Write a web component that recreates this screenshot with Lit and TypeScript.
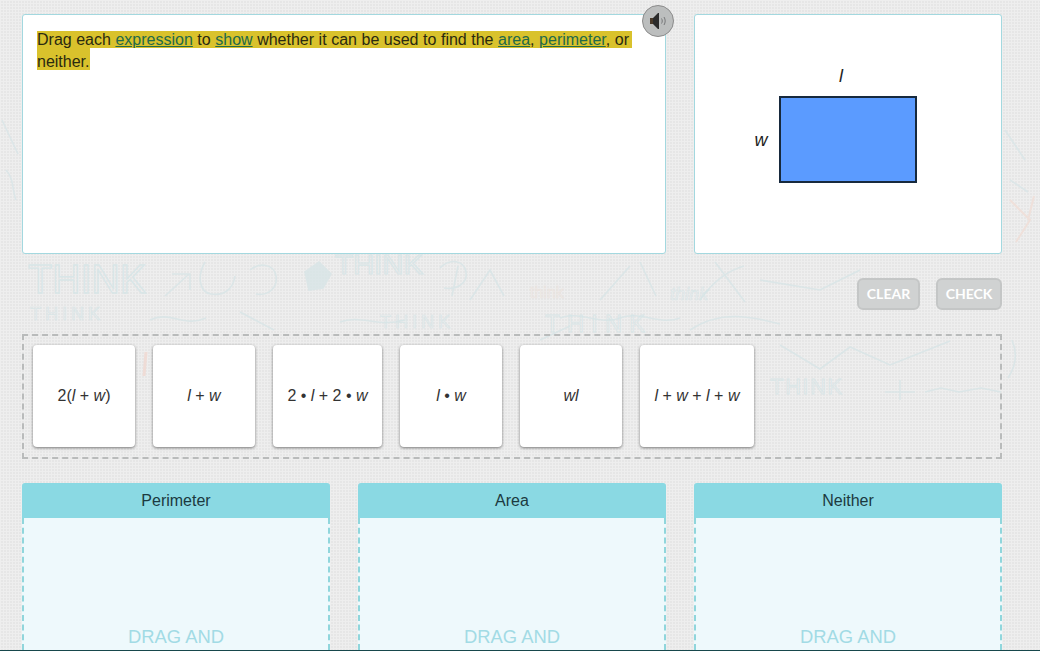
import { LitElement, html, css, svg } from "lit";
import { customElement } from "lit/decorators.js";

type Term = string | { v: string };
const v = (s: string) => ({ v: s });

const EXPRESSIONS: { w: number; terms: Term[] }[] = [
  { w: 102, terms: ["2(", v("l"), " + ", v("w"), ")"] },
  { w: 102, terms: [v("l"), " + ", v("w")] },
  { w: 109, terms: ["2 • ", v("l"), " + 2 • ", v("w")] },
  { w: 102, terms: [v("l"), " • ", v("w")] },
  { w: 102, terms: [v("w"), v("l")] },
  { w: 114, terms: [v("l"), " + ", v("w"), " + ", v("l"), " + ", v("w")] },
];

const BINS = ["Perimeter", "Area", "Neither"];

// faint handwriting behind the page
const doodles = svg`
  <g fill="none" stroke="#d8e5e7" stroke-width="1.6" opacity="0.8">
    <path d="M165 296l24-22M172 274h18v16M205 262c-8 14-6 30 6 32s22-4 24-18M250 270c10-8 24-6 26 6s-8 20-20 18" />
    <path d="M305 272l14-10 12 12-8 14-14 2z" fill="#d8e5e7" />
    <path d="M440 268c10-10 24-8 26 4s-10 18-22 16M452 296l6-30M470 300l20-30 14 26" />
    <path d="M600 300l30-34M640 262l16 34M700 300c14-20 30-30 44-34M760 280l60 10 40-20M715 262l30 40" />
    <path d="M560 318c20-8 40 8 60 0s40 8 60 0M540 340l30-14M690 330c30-20 60-14 90-6" />
    <path d="M885 392h30M925 392l16-4 18 4 22-4 20 4M900 380v20" />
    <path d="M1012 340c6 14 4 26-4 38M780 345l40 24 30-22 40 18 60-24" />
    <path d="M2 120l16 34M6 170c8 8 6 20 10 30M1005 130l20 30M1010 180l18 12" />
    <path d="M150 320c20-10 34 8 56-2M340 322c20-8 40 6 64-2M240 312l34 18" />
  </g>
  <path d="M1010 200l20 20-14 22M1034 196l-6 24" fill="none" stroke="#efe0da" stroke-width="2" />
  <path d="M146 352l-2 24" fill="none" stroke="#efdcd6" stroke-width="3" />
  <g font-family="Liberation Sans, sans-serif" fill="none" stroke="#d6e5e7" opacity="0.85">
    <text x="28" y="293" font-size="40" stroke-width="1.4" textLength="118" lengthAdjust="spacingAndGlyphs">THINK</text>
    <text x="335" y="274" font-size="28" stroke-width="1.2" textLength="88" lengthAdjust="spacingAndGlyphs">THINK</text>
    <text x="380" y="328" font-size="18" stroke-width="0.7" textLength="70">THINK</text>
    <text x="30" y="320" font-size="18" stroke-width="0.7" textLength="70">THINK</text>
    <text x="770" y="394" font-size="22" stroke-width="0.8" textLength="72">THINK</text>
    <text x="530" y="298" font-size="16" stroke-width="0.6" stroke="#ece2dc">think</text>
    <text x="670" y="300" font-size="18" stroke-width="0.6" font-style="italic">think</text>
    <text x="545" y="332" font-size="24" stroke-width="0.8" textLength="100">THINK</text>
  </g>
`;

@customElement("app-root")
export class AppRoot extends LitElement {
  static styles = css`
    :host {
      display: block;
      position: relative;
      width: 1040px;
      height: 651px;
      overflow: hidden;
      box-sizing: border-box;
      border-bottom: 1px solid #17474c;
      font-family: "Liberation Sans", Arial, sans-serif;
      font-size: 16px;
      color: #222;
      background-color: #e6e6e6;
      background-image: linear-gradient(#eeeeee 1px, transparent 1px),
        linear-gradient(90deg, #eeeeee 1px, transparent 1px);
      background-size: 3px 3px;
    }
    .doodles {
      position: absolute;
      inset: 0;
    }
    .page {
      position: relative;
      display: flex;
      flex-direction: column;
      padding: 14px 38px 0 22px;
    }
    .top {
      display: flex;
      gap: 28px;
      height: 240px;
    }
    .panel {
      box-sizing: border-box;
      background: #fff;
      border: 1px solid #a3d8df;
      border-radius: 3px;
    }
    .prompt {
      position: relative;
      width: 644px;
      padding: 16px 0 0 14px;
    }
    .line {
      box-sizing: border-box;
      background: #d9c22c;
      color: #2a2a10;
    }
    .line.first {
      width: 595px;
      height: 17px;
      padding-right: 3px;
      line-height: 17px;
      text-align: justify;
      text-align-last: justify;
    }
    .line.last {
      width: fit-content;
      height: 22px;
      padding-right: 1px;
      line-height: 28px;
    }
    .term {
      color: #23694a;
      text-decoration: underline;
    }
    .speaker {
      position: absolute;
      top: -10px;
      right: -9px;
      box-sizing: border-box;
      width: 32px;
      height: 32px;
      padding: 0 0 0 2px;
      border: 1px solid #8c8c8c;
      border-radius: 50%;
      background: #bcbebe;
      display: flex;
      align-items: center;
      justify-content: center;
    }
    .figure {
      width: 308px;
    }
    .figure svg {
      display: block;
    }
    .actions {
      display: flex;
      justify-content: flex-end;
      gap: 16px;
      margin-top: 24px;
    }
    .btn {
      box-sizing: border-box;
      height: 32px;
      padding: 0 0 2px;
      border: 2px solid #c4c6c6;
      border-radius: 6px;
      background: #d0d2d2;
      color: #fff;
      font-family: Lato, sans-serif;
      font-weight: 700;
      font-size: 14px;
    }
    .btn.clear {
      width: 63px;
    }
    .btn.check {
      width: 66px;
    }
    .tray {
      box-sizing: border-box;
      display: flex;
      gap: 18px;
      height: 125px;
      margin-top: 24px;
      padding: 9px;
      border: 2px dashed #b9bbbb;
    }
    .card {
      display: flex;
      align-items: center;
      justify-content: center;
      height: 102px;
      background: #fff;
      border-radius: 4px;
      box-shadow: 0 1px 3px rgba(0, 0, 0, 0.5);
      white-space: pre;
      color: #333;
    }
    .bins {
      display: grid;
      grid-template-columns: repeat(3, 308px);
      gap: 28px;
      margin-top: 24px;
    }
    .bin-head {
      height: 35px;
      line-height: 36px;
      text-align: center;
      background: #8ad9e3;
      border-radius: 3px 3px 0 0;
      color: #1c3a40;
    }
    .bin-body {
      box-sizing: border-box;
      height: 132px;
      padding-top: 108px;
      background: #eef9fc;
      border-left: 2px dashed #90d6dc;
      border-right: 2px dashed #90d6dc;
      text-align: center;
      font-size: 18.4px;
      line-height: 21px;
      color: #a2dbe5;
    }
  `;

  renderExpression(terms: Term[]) {
    return terms.map((t) => (typeof t === "string" ? t : html`<i>${t.v}</i>`));
  }

  render() {
    return html`
      <svg class="doodles" width="1040" height="651" aria-hidden="true">${doodles}</svg>
      <div class="page">
        <div class="top">
          <div class="panel prompt">
            <div class="line first">
              Drag each <span class="term">expression</span> to <span class="term">show</span>
              whether it can be used to find the <span class="term">area</span>,
              <span class="term">perimeter</span>, or
            </div>
            <div class="line last">neither.</div>
            <button class="speaker" aria-label="Read aloud">
              <svg width="20" height="18" viewBox="0 0 20 18">
                <path d="M1 6h3l5-5h1v16H9l-5-5H1z" fill="#2b2b2b" />
                <path d="M4 6v6h-3V6z" fill="#4a3a2a" />
                <path d="M12.5 6.5c1 1.6 1 3.4 0 5M15 5c1.6 2.6 1.6 5.4 0 8" fill="none" stroke="#77787a" stroke-width="1" />
              </svg>
            </button>
          </div>
          <div class="panel figure">
            <svg width="306" height="238" viewBox="0 0 306 238">
              <rect x="85" y="82" width="136" height="85" fill="#5b9bff" stroke="#17293d" stroke-width="2" />
              <text x="146" y="67" text-anchor="middle" font-family="Liberation Sans" font-style="italic" font-size="18" fill="#222">l</text>
              <text x="66" y="131" text-anchor="middle" font-family="Liberation Sans" font-style="italic" font-size="18" fill="#222">w</text>
            </svg>
          </div>
        </div>
        <div class="actions">
          <button class="btn clear">CLEAR</button>
          <button class="btn check">CHECK</button>
        </div>
        <div class="tray">
          ${EXPRESSIONS.map(
            (e) => html`<div class="card" style="width:${e.w}px"><span>${this.renderExpression(e.terms)}</span></div>`
          )}
        </div>
        <div class="bins">
          ${BINS.map(
            (b) => html`
              <div>
                <div class="bin-head">${b}</div>
                <div class="bin-body">DRAG AND</div>
              </div>
            `
          )}
        </div>
      </div>
    `;
  }
}
